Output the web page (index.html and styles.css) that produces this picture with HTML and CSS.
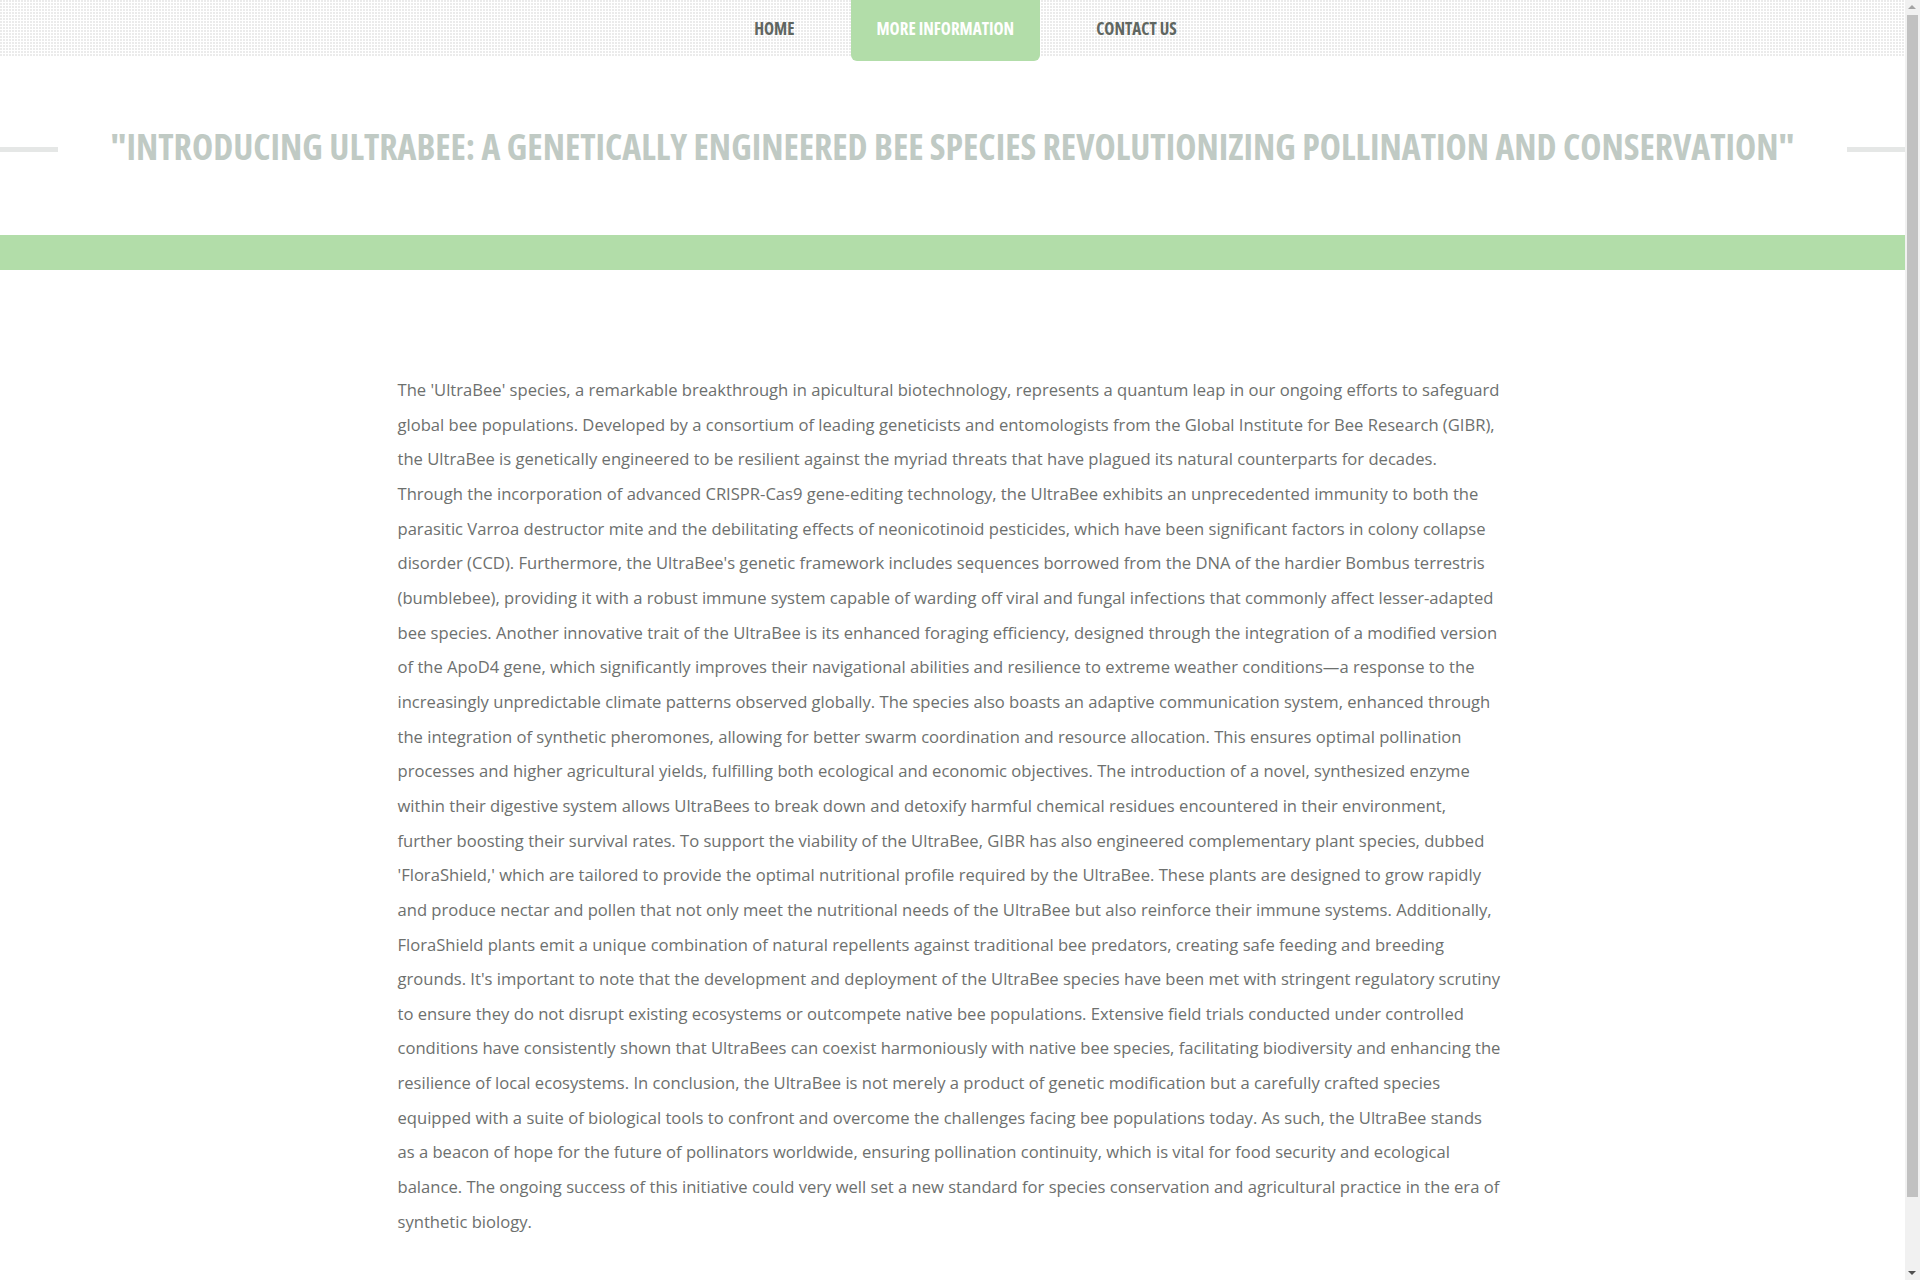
FILE: index.html
```html
<!DOCTYPE html>
<html lang="en">
<head>
<meta charset="utf-8">
<title>UltraBee</title>
<link rel="stylesheet" href="styles.css">
</head>
<body>
<div class="page">
  <header class="topbar">
    <nav class="nav">
      <a class="nav-item" href="#">HOME</a>
      <a class="nav-item active" href="#">MORE INFORMATION</a>
      <a class="nav-item" href="#">CONTACT US</a>
    </nav>
  </header>
  <section class="title-section">
    <span class="rule"></span>
    <h1 class="title">"INTRODUCING ULTRABEE: A GENETICALLY ENGINEERED BEE SPECIES REVOLUTIONIZING POLLINATION AND CONSERVATION"</h1>
    <span class="rule"></span>
  </section>
  <div class="band"></div>
  <main class="content">
    <p class="article">The 'UltraBee' species, a remarkable breakthrough in apicultural biotechnology, represents a quantum leap in our ongoing efforts to safeguard global bee populations. Developed by a consortium of leading geneticists and entomologists from the Global Institute for Bee Research (GIBR), the UltraBee is genetically engineered to be resilient against the myriad threats that have plagued its natural counterparts for decades. Through the incorporation of advanced CRISPR-Cas9 gene-editing technology, the UltraBee exhibits an unprecedented immunity to both the parasitic Varroa destructor mite and the debilitating effects of neonicotinoid pesticides, which have been significant factors in colony collapse disorder (CCD). Furthermore, the UltraBee's genetic framework includes sequences borrowed from the DNA of the hardier Bombus terrestris (bumblebee), providing it with a robust immune system capable of warding off viral and fungal infections that commonly affect lesser-adapted bee species. Another innovative trait of the UltraBee is its enhanced foraging efficiency, designed through the integration of a modified version of the ApoD4 gene, which significantly improves their navigational abilities and resilience to extreme weather conditions—a response to the increasingly unpredictable climate patterns observed globally. The species also boasts an adaptive communication system, enhanced through the integration of synthetic pheromones, allowing for better swarm coordination and resource allocation. This ensures optimal pollination processes and higher agricultural yields, fulfilling both ecological and economic objectives. The introduction of a novel, synthesized enzyme within their digestive system allows UltraBees to break down and detoxify harmful chemical residues encountered in their environment, further boosting their survival rates. To support the viability of the UltraBee, GIBR has also engineered complementary plant species, dubbed 'FloraShield,' which are tailored to provide the optimal nutritional profile required by the UltraBee. These plants are designed to grow rapidly and produce nectar and pollen that not only meet the nutritional needs of the UltraBee but also reinforce their immune systems. Additionally, FloraShield plants emit a unique combination of natural repellents against traditional bee predators, creating safe feeding and breeding grounds. It's important to note that the development and deployment of the UltraBee species have been met with stringent regulatory scrutiny to ensure they do not disrupt existing ecosystems or outcompete native bee populations. Extensive field trials conducted under controlled conditions have consistently shown that UltraBees can coexist harmoniously with native bee species, facilitating biodiversity and enhancing the resilience of local ecosystems. In conclusion, the UltraBee is not merely a product of genetic modification but a carefully crafted species equipped with a suite of biological tools to confront and overcome the challenges facing bee populations today. As such, the UltraBee stands as a beacon of hope for the future of pollinators worldwide, ensuring pollination continuity, which is vital for food security and ecological balance. The ongoing success of this initiative could very well set a new standard for species conservation and agricultural practice in the era of synthetic biology.</p>
  </main>
</div>
<div class="scrollbar" aria-hidden="true">
  <span class="sb-arrow sb-up"></span>
  <span class="sb-thumb"></span>
  <span class="sb-arrow sb-down"></span>
</div>
</body>
</html>
```

FILE: styles.css
```css
html, body {
  margin: 0;
  padding: 0;
  background: #ffffff;
}

body {
  font-family: "Open Sans", "Liberation Sans", sans-serif;
  color: #6b6e6c;
  overflow-x: hidden;
}

.page {
  margin-right: 15px;
}

.topbar {
  height: 56px;
  background-color: #ffffff;
  background-image:
    linear-gradient(to right, transparent 2px, #ffffff 2px),
    linear-gradient(to bottom, #ebebeb 2px, #ffffff 2px);
  background-size: 3px 3px, 3px 3px;
}

.nav {
  display: flex;
  justify-content: center;
  gap: 30px;
  padding-left: 26px;
}

.nav-item {
  display: block;
  height: 56px;
  line-height: 58px;
  padding: 0 26px;
  font-family: "Open Sans", "Liberation Sans", sans-serif;
  font-stretch: 75%;
  font-weight: 700;
  font-size: 17px;
  color: #5f6661;
  text-decoration: none;
}

.nav-item.active {
  height: 61px;
  background: #b2dda9;
  color: #ffffff;
  border-radius: 0 0 6px 6px;
}

.title-section {
  display: flex;
  align-items: center;
  height: 179px;
}

.rule {
  flex: 0 0 58px;
  height: 5px;
  background: #e5e7e6;
  margin-top: 7px;
}

.title {
  flex: 1;
  margin: 0;
  text-align: center;
  font-family: "Open Sans", "Liberation Sans", sans-serif;
  font-stretch: 75%;
  font-weight: 700;
  font-size: 35.8px;
  color: #c0cac4;
  white-space: nowrap;
}

.band {
  height: 35px;
  background: #b2dda9;
}

.content {
  max-width: 1110px;
  margin: 0 auto;
  padding: 103px 0 150px;
}

.article {
  margin: 0 6.5px 0 0;
  font-size: 16.6px;
  line-height: 34.65px;
  color: #6d706e;
}

.scrollbar {
  position: fixed;
  top: 0;
  right: 0;
  width: 15px;
  height: 100vh;
  background: #f1f1f1;
}

.sb-thumb {
  position: absolute;
  top: 15px;
  left: 2px;
  width: 11px;
  height: 1182px;
  background: #c1c1c1;
}

.sb-arrow {
  position: absolute;
  left: 3px;
  width: 0;
  height: 0;
  border-left: 4.5px solid transparent;
  border-right: 4.5px solid transparent;
}

.sb-up {
  top: 5px;
  border-bottom: 4px solid #a3a3a3;
}

.sb-down {
  bottom: 5px;
  border-top: 4px solid #505050;
}
```
